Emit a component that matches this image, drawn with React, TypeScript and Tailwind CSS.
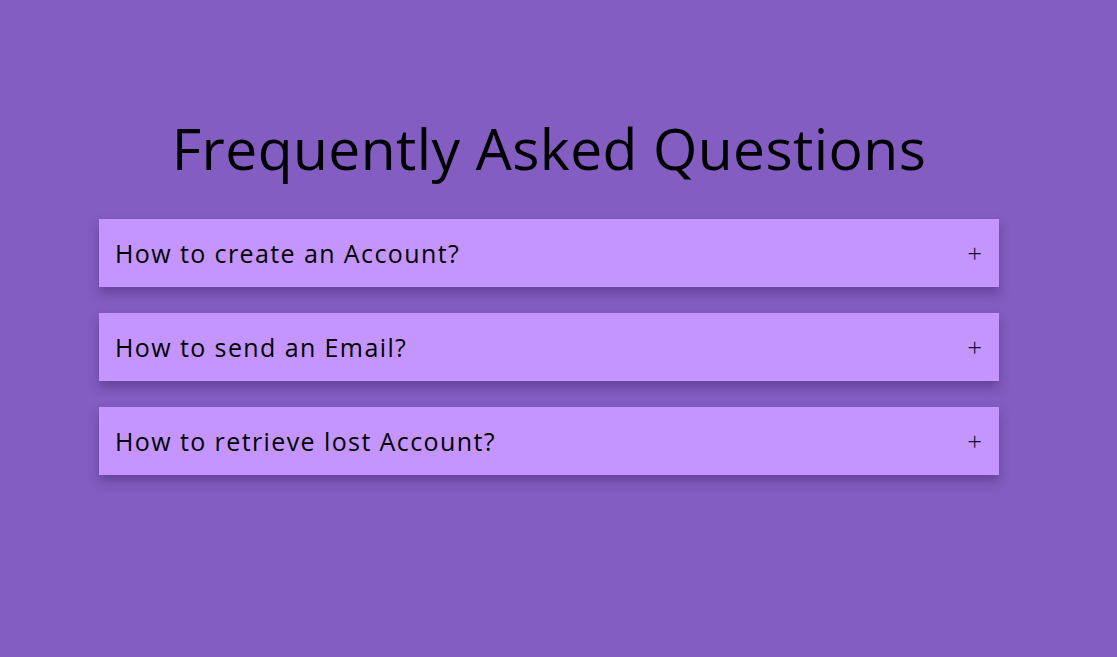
import { useState } from "react";

const questions = [
  "How to create an Account?",
  "How to send an Email?",
  "How to retrieve lost Account?",
];

const FaqItem = ({ question }: { question: string }) => {
  const [open, setOpen] = useState<boolean>(false);

  return (
    <div className="bg-[#c495ff] shadow-[0_6px_10px_rgba(40,20,80,0.35)]">
      <button
        type="button"
        onClick={() => setOpen(!open)}
        className="w-full h-[68px] flex items-center justify-between pl-4 pr-[17px] text-left cursor-pointer"
      >
        <span className="text-[25px] text-black tracking-[1.4px] pt-[2px]">
          {question}
        </span>
        <span className="text-[26px] font-light text-[#0d0b2e] leading-none">
          {open ? "−" : "+"}
        </span>
      </button>
      {open && (
        <div className="px-4 pb-5 text-[17px] text-black">
          Answer coming soon.
        </div>
      )}
    </div>
  );
};

const App = () => {
  return (
    <div
      className="w-full min-h-[657px] bg-[#835dc1] flex justify-center pr-[19px]"
      style={{ fontFamily: "'Open Sans', 'Liberation Sans', sans-serif" }}
    >
      <div className="w-[900px] pt-[108px]">
        <h1 className="text-center text-[57px] leading-[80px] tracking-[0.4px] text-black mb-[31px]">
          Frequently Asked Questions
        </h1>
        <div className="flex flex-col gap-[26px]">
          {questions.map((q) => (
            <FaqItem key={q} question={q} />
          ))}
        </div>
      </div>
    </div>
  );
};

export default App;
